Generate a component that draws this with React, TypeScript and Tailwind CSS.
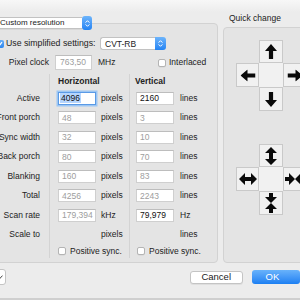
import React from 'react';

// macOS style "Custom resolution" dialog (SwitchResX-ish), clipped to 300x300

type Row = {
  label: string;
  h?: string;
  v?: string;
  hu?: string;
  vu?: string;
  hOn?: boolean;
  vOn?: boolean;
  focus?: boolean;
};

const rows: Row[] = [
  { label: 'Active', h: '4096', v: '2160', hu: 'pixels', vu: 'lines', hOn: true, vOn: true, focus: true },
  { label: 'Front porch', h: '48', v: '3', hu: 'pixels', vu: 'lines' },
  { label: 'Sync width', h: '32', v: '10', hu: 'pixels', vu: 'lines' },
  { label: 'Back porch', h: '80', v: '70', hu: 'pixels', vu: 'lines' },
  { label: 'Blanking', h: '160', v: '83', hu: 'pixels', vu: 'lines' },
  { label: 'Total', h: '4256', v: '2243', hu: 'pixels', vu: 'lines' },
  { label: 'Scan rate', h: '179,394', v: '79,979', hu: 'kHz', vu: 'Hz', vOn: true },
  { label: 'Scale to', hu: 'pixels', vu: 'lines' },
];

function Stepper({ className = '' }: { className?: string }) {
  return (
    <div
      className={`flex flex-col items-center justify-center gap-[1px] bg-gradient-to-b from-[#6cb4fb] to-[#2183f3] ${className}`}
    >
      <svg width="5" height="3" viewBox="0 0 5 3">
        <path d="M0.6 2.6 L2.5 0.7 L4.4 2.6" stroke="#fff" strokeWidth="1" fill="none" />
      </svg>
      <svg width="5" height="3" viewBox="0 0 5 3">
        <path d="M0.6 0.4 L2.5 2.3 L4.4 0.4" stroke="#fff" strokeWidth="1" fill="none" />
      </svg>
    </div>
  );
}

function Checkbox({ checked = false }: { checked?: boolean }) {
  if (checked) {
    return (
      <div className="w-[8px] h-[8px] shrink-0 rounded-[2px] bg-gradient-to-b from-[#64adf8] to-[#2a86f0] flex items-center justify-center">
        <svg width="6" height="6" viewBox="0 0 6 6">
          <path d="M1 3.2 L2.4 4.6 L5 1.2" stroke="#fff" strokeWidth="1.2" fill="none" />
        </svg>
      </div>
    );
  }
  return (
    <div className="w-[8px] h-[8px] shrink-0 rounded-[2px] bg-white border border-[#b4b4b4] shadow-[0_0.5px_0_rgba(0,0,0,0.08)]" />
  );
}

function Field({ value, on = false, focus = false }: { value: string; on?: boolean; focus?: boolean }) {
  if (focus) {
    return (
      <div className="w-[38px] h-[13px] bg-white border border-[#5a9ae6] shadow-[0_0_0_1.5px_#9cc6f3] flex items-center pl-[1px]">
        <span className="bg-[#b5d5fe] px-[1px] leading-[10px] text-[#111]">{value}</span>
      </div>
    );
  }
  return (
    <div
      className={`w-[38px] h-[13px] bg-white border border-[#cfcfcf] border-t-[#bdbdbd] flex items-center pl-[3px] leading-[10px] ${
        on ? 'text-[#111]' : 'text-[#9d9d9d]'
      }`}
    >
      {value}
    </div>
  );
}

// bold block arrow pointing up, 12x15
function ArrowUp({ className = '' }: { className?: string }) {
  return (
    <svg width="12" height="15" viewBox="0 0 12 15" className={className}>
      <path d="M6 0 L12 7 L8.1 7 L8.1 15 L3.9 15 L3.9 7 L0 7 Z" fill="#0a0a0a" />
    </svg>
  );
}

// double headed arrow (vertical), 12x18
function ArrowBoth({ className = '' }: { className?: string }) {
  return (
    <svg width="12" height="18" viewBox="0 0 12 18" className={className}>
      <path d="M6 0 L12 6 L8 6 L8 12 L12 12 L6 18 L0 12 L4 12 L4 6 L0 6 Z" fill="#0a0a0a" />
    </svg>
  );
}

// arrows pointing at each other (vertical), 12x20
function ArrowIn({ className = '' }: { className?: string }) {
  return (
    <svg width="12" height="20" viewBox="0 0 12 20" className={className}>
      <path d="M4 0 H8 V4 H12 L6 10 L0 4 H4 Z" fill="#0a0a0a" />
      <path d="M6 10 L12 16 H8 V20 H4 V16 H0 Z" fill="#0a0a0a" />
    </svg>
  );
}

function Cell({ children, edge = true }: { children?: React.ReactNode; edge?: boolean }) {
  return (
    <div
      className={`flex items-center justify-center bg-[#f1f1f1] ${edge ? 'border border-[#c9c9c9]' : ''}`}
    >
      {children}
    </div>
  );
}

function Cross({ top, left, right, bottom }: { top: React.ReactNode; left: React.ReactNode; right: React.ReactNode; bottom: React.ReactNode }) {
  return (
    <div className="grid grid-cols-[23px_24px_24px] grid-rows-[23px_24px_24px]">
      <div />
      <Cell>{top}</Cell>
      <div />
      <Cell>{left}</Cell>
      <Cell edge={false} />
      <Cell>{right}</Cell>
      <div />
      <Cell>{bottom}</Cell>
      <div />
    </div>
  );
}

export default function App() {
  return (
    <div className="w-[300px] h-[300px] overflow-hidden bg-[#ececec] flex flex-col font-['Liberation_Sans',Arial,sans-serif] text-[8.5px] text-[#222]">
      {/* top strip */}
      <div className="h-[12px] shrink-0 bg-gradient-to-b from-[#f7f7f7] to-[#ececec]" />

      <div className="flex h-[251px] shrink-0">
        {/* Left column: popup + settings box */}
        <div className="ml-[-12px] w-[230px] shrink-0 flex flex-col">
          <div className="mt-[4px] ml-[2px] flex h-[14px] w-[102px] relative z-10">
            <div className="flex-1 h-[12px] my-auto bg-white border border-[#c2c2c2] border-r-0 rounded-l-[3px] pl-[9px] leading-[10px] text-[8px] text-[#1a1a1a] shadow-[0_1px_0_rgba(0,0,0,0.05)]">
              Custom resolution
            </div>
            <Stepper className="w-[10px] h-[14px] rounded-[3px]" />
          </div>

          <div className="mt-[-7px] flex-1 bg-[#e4e4e4] border border-[#d2d2d2] rounded-[4px] flex flex-col">
            {/* simplified settings */}
            <div className="mt-[13px] flex items-center h-[13px]">
              <div className="w-[111px] flex items-center pl-[7px]">
                <Checkbox checked />
                <span className="ml-[2px] text-[8.75px]">Use simplified settings:</span>
              </div>
              <div className="flex h-[13px] w-[66px]">
                <div className="flex-1 bg-white border border-[#c2c2c2] border-r-0 rounded-l-[3px] pl-[4px] flex items-center leading-[10px]">
                  CVT-RB
                </div>
                <Stepper className="w-[11px] h-[13px] rounded-r-[3px]" />
              </div>
            </div>

            {/* pixel clock */}
            <div className="mt-[5px] flex items-center h-[15px]">
              <div className="w-[60px] text-right">Pixel clock</div>
              <div className="ml-[6px] w-[37px] h-[15px] bg-white border border-[#cfcfcf] border-t-[#bdbdbd] flex items-center pl-[4px] text-[#9d9d9d]">
                763,50
              </div>
              <div className="ml-[6px] w-[60px]">MHz</div>
              <Checkbox />
              <span className="ml-[3px]">Interlaced</span>
            </div>

            {/* table */}
            <div className="mt-[4px] flex flex-col">
              <div className="grid grid-cols-[61px_80px_1fr] h-[14px] items-center font-bold">
                <div className="h-full border-r border-[#d3d3d3]" />
                <div className="h-full border-r border-[#d3d3d3] pl-[8px] flex items-center">Horizontal</div>
                <div className="pl-[5px]">Vertical</div>
              </div>

              {rows.map((r, i) => (
                <div
                  key={r.label}
                  className={`grid grid-cols-[61px_80px_1fr] ${i === 0 ? 'h-[20px]' : 'h-[19.5px]'}`}
                >
                  <div className="border-r border-[#d3d3d3] pr-[9px] flex items-center justify-end whitespace-nowrap">
                    {r.label}
                  </div>
                  <div className="border-r border-[#d3d3d3] pl-[8px] flex items-center">
                    {r.h ? <Field value={r.h} on={r.hOn} focus={r.focus} /> : <div className="w-[38px]" />}
                    <span className="ml-[5px]">{r.hu}</span>
                  </div>
                  <div className="pl-[6px] flex items-center">
                    {r.v ? <Field value={r.v} on={r.vOn} /> : <div className="w-[38px]" />}
                    <span className="ml-[6px]">{r.vu}</span>
                  </div>
                </div>
              ))}

              <div className="grid grid-cols-[61px_80px_1fr] h-[13.5px]">
                <div className="border-r border-[#d3d3d3]" />
                <div className="border-r border-[#d3d3d3] pl-[8px] flex items-center">
                  <Checkbox />
                  <span className="ml-[4px]">Positive sync.</span>
                </div>
                <div className="pl-[7px] flex items-center">
                  <Checkbox />
                  <span className="ml-[4px] whitespace-nowrap">Positive sync.</span>
                </div>
              </div>
            </div>
          </div>
        </div>

        {/* Right column: quick change */}
        <div className="ml-[5px] w-[90px] shrink-0 flex flex-col">
          <div className="h-[13px] leading-[13px] pl-[6px]">Quick change</div>
          <div className="mt-[2px] flex-1 bg-[#e4e4e4] border border-[#d2d2d2] rounded-[4px] pl-[12px] pt-[12px] flex flex-col">
            <Cross
              top={<ArrowUp />}
              left={<ArrowUp className="-rotate-90" />}
              right={<ArrowUp className="rotate-90" />}
              bottom={<ArrowUp className="rotate-180" />}
            />
            <div className="mt-[33px]">
              <Cross
                top={<ArrowBoth />}
                left={<ArrowBoth className="rotate-90" />}
                right={<ArrowIn className="rotate-90" />}
                bottom={<ArrowIn />}
              />
            </div>
          </div>
        </div>
      </div>

      {/* bottom buttons */}
      <div className="flex-1 flex flex-col">
        <div className="flex-1 flex items-start">
          <div className="ml-[-9px] mt-[6px] w-[16px] h-[16px] rounded-[3px] bg-white border border-[#c4c4c4] flex items-center justify-end pr-[2px]">
            <svg width="6" height="5" viewBox="0 0 6 5">
              <path d="M0.5 2.5 L2.2 4.2 L5.5 0.6" stroke="#444" strokeWidth="1" fill="none" />
            </svg>
          </div>
          <div className="ml-[184px] mt-[8px] w-[58px] h-[13px] rounded-[3px] bg-white border border-[#c4c4c4] shadow-[0_1px_0_rgba(0,0,0,0.06)] flex items-center justify-center text-[9.5px] text-[#1a1a1a]">
            Cancel
          </div>
          <div className="ml-[9px] mt-[7px] w-[52px] h-[14px] rounded-[3px] bg-gradient-to-b from-[#68b2fb] to-[#1a7ff2] flex items-center pl-[14px] text-[9.5px] text-white">
            OK
          </div>
        </div>
        <div className="h-[2px] bg-[#cfcfcf]" />
      </div>
    </div>
  );
}
